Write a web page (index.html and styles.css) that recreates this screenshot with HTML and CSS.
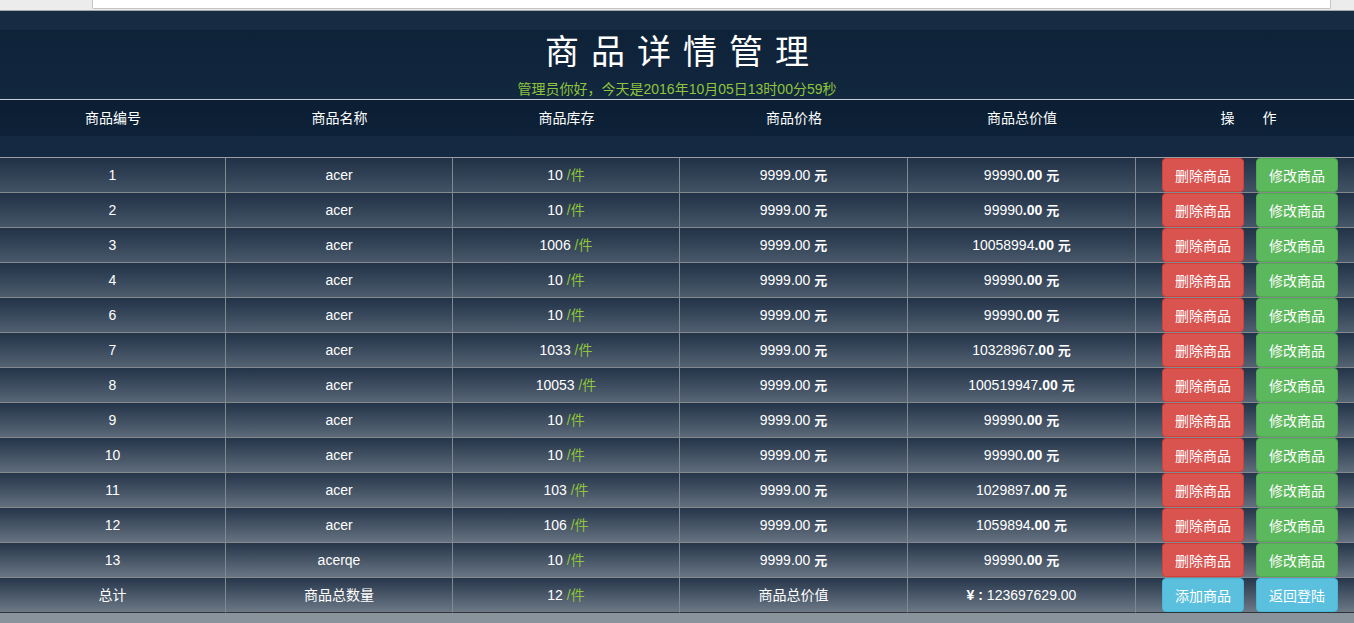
FILE: index.html
```html
<!DOCTYPE html>
<html lang="zh-CN">
<head>
<meta charset="utf-8">
<title>商品详情管理</title>
<link rel="stylesheet" href="styles.css">
</head>
<body>
<div class="chrome"><div class="addr"></div></div>
<div class="band"></div>
<header class="titlebox">
  <h1 class="title">商品详情管理</h1>
  <p class="greet">管理员你好，今天是2016年10月05日13时00分59秒</p>
</header>
<table class="goods">
  <colgroup>
    <col class="c1"><col class="c2"><col class="c3"><col class="c4"><col class="c5"><col class="c6">
  </colgroup>
  <thead>
    <tr class="head">
      <th>商品编号</th><th>商品名称</th><th>商品库存</th><th>商品价格</th><th>商品总价值</th><th class="op">操　　作</th>
    </tr>
    <tr class="spacer"><th colspan="6"></th></tr>
  </thead>
  <tbody>
    <tr><td>1</td><td>acer</td><td>10 <span class="unit">/件</span></td><td>9999.00 <b class="yuan">元</b></td><td>99990<b>.00 <span class="yuan">元</span></b></td><td class="ops"><div class="btns"><button class="btn red">删除商品</button><button class="btn green">修改商品</button></div></td></tr>
    <tr><td>2</td><td>acer</td><td>10 <span class="unit">/件</span></td><td>9999.00 <b class="yuan">元</b></td><td>99990<b>.00 <span class="yuan">元</span></b></td><td class="ops"><div class="btns"><button class="btn red">删除商品</button><button class="btn green">修改商品</button></div></td></tr>
    <tr><td>3</td><td>acer</td><td>1006 <span class="unit">/件</span></td><td>9999.00 <b class="yuan">元</b></td><td>10058994<b>.00 <span class="yuan">元</span></b></td><td class="ops"><div class="btns"><button class="btn red">删除商品</button><button class="btn green">修改商品</button></div></td></tr>
    <tr><td>4</td><td>acer</td><td>10 <span class="unit">/件</span></td><td>9999.00 <b class="yuan">元</b></td><td>99990<b>.00 <span class="yuan">元</span></b></td><td class="ops"><div class="btns"><button class="btn red">删除商品</button><button class="btn green">修改商品</button></div></td></tr>
    <tr><td>6</td><td>acer</td><td>10 <span class="unit">/件</span></td><td>9999.00 <b class="yuan">元</b></td><td>99990<b>.00 <span class="yuan">元</span></b></td><td class="ops"><div class="btns"><button class="btn red">删除商品</button><button class="btn green">修改商品</button></div></td></tr>
    <tr><td>7</td><td>acer</td><td>1033 <span class="unit">/件</span></td><td>9999.00 <b class="yuan">元</b></td><td>10328967<b>.00 <span class="yuan">元</span></b></td><td class="ops"><div class="btns"><button class="btn red">删除商品</button><button class="btn green">修改商品</button></div></td></tr>
    <tr><td>8</td><td>acer</td><td>10053 <span class="unit">/件</span></td><td>9999.00 <b class="yuan">元</b></td><td>100519947<b>.00 <span class="yuan">元</span></b></td><td class="ops"><div class="btns"><button class="btn red">删除商品</button><button class="btn green">修改商品</button></div></td></tr>
    <tr><td>9</td><td>acer</td><td>10 <span class="unit">/件</span></td><td>9999.00 <b class="yuan">元</b></td><td>99990<b>.00 <span class="yuan">元</span></b></td><td class="ops"><div class="btns"><button class="btn red">删除商品</button><button class="btn green">修改商品</button></div></td></tr>
    <tr><td>10</td><td>acer</td><td>10 <span class="unit">/件</span></td><td>9999.00 <b class="yuan">元</b></td><td>99990<b>.00 <span class="yuan">元</span></b></td><td class="ops"><div class="btns"><button class="btn red">删除商品</button><button class="btn green">修改商品</button></div></td></tr>
    <tr><td>11</td><td>acer</td><td>103 <span class="unit">/件</span></td><td>9999.00 <b class="yuan">元</b></td><td>1029897<b>.00 <span class="yuan">元</span></b></td><td class="ops"><div class="btns"><button class="btn red">删除商品</button><button class="btn green">修改商品</button></div></td></tr>
    <tr><td>12</td><td>acer</td><td>106 <span class="unit">/件</span></td><td>9999.00 <b class="yuan">元</b></td><td>1059894<b>.00 <span class="yuan">元</span></b></td><td class="ops"><div class="btns"><button class="btn red">删除商品</button><button class="btn green">修改商品</button></div></td></tr>
    <tr><td>13</td><td>acerqe</td><td>10 <span class="unit">/件</span></td><td>9999.00 <b class="yuan">元</b></td><td>99990<b>.00 <span class="yuan">元</span></b></td><td class="ops"><div class="btns"><button class="btn red">删除商品</button><button class="btn green">修改商品</button></div></td></tr>
    <tr class="total"><td>总计</td><td>商品总数量</td><td>12 <span class="unit">/件</span></td><td>商品总价值</td><td><b>¥ :</b> 123697629.00</td><td class="ops"><div class="btns"><button class="btn blue">添加商品</button><button class="btn blue">返回登陆</button></div></td></tr>
  </tbody>
</table>
</body>
</html>
```
FILE: styles.css
```css
html, body {
  margin: 0;
  padding: 0;
}
body {
  background: #89939c;
  font-family: "Liberation Sans", "Noto Sans CJK SC", sans-serif;
  font-size: 14px;
  color: #fff;
}
.chrome {
  height: 10px;
  background: #ececec;
  border-bottom: 1px solid #a8a8a8;
  padding-left: 92px;
  padding-right: 23px;
}
.addr {
  height: 8px;
  background: #fff;
  border: 1px solid #c4c4c4;
  border-top: none;
  border-radius: 0 0 2px 2px;
}
.band {
  height: 19px;
  background: #172b42;
}
.titlebox {
  height: 69px;
  background: linear-gradient(#0e2238, #12283f);
  border-bottom: 1px solid #c9ced4;
  text-align: center;
}
.title {
  margin: 0;
  padding-left: 12px;
  font-family: "Noto Sans CJK SC", sans-serif;
  font-weight: normal;
  font-size: 34px;
  line-height: 40px;
  letter-spacing: 12px;
  color: #fff;
}
.greet {
  margin: 9px 0 0;
  font-size: 14px;
  line-height: 20px;
  color: #8fc43c;
}
.goods {
  width: 100%;
  table-layout: fixed;
  border-collapse: separate;
  border-spacing: 0;
}
.c1 { width: 226px; }
.c2 { width: 227px; }
.c3 { width: 227px; }
.c4 { width: 228px; }
.c5 { width: 228px; }
.goods th, .goods td {
  box-sizing: border-box;
  padding: 0;
  text-align: center;
  font-weight: normal;
}
.head th {
  height: 36px;
  background: linear-gradient(#0b1e33, #0d2138);
  line-height: 20px;
}
.op {
  white-space: pre;
  padding-left: 7px !important;
}
.spacer th {
  height: 22px;
  background: #152a42;
  border-bottom: 1px solid #9a9ea3;
}
.goods tbody {
  background: linear-gradient(#405164, #6f7b88);
}
.goods tbody tr {
  background: linear-gradient(rgba(27, 43, 65, 0.85), rgba(27, 43, 65, 0));
}
.goods td {
  height: 35px;
  border-bottom: 1px solid #85898e;
  line-height: 20px;
}
.goods td:not(:last-child) {
  border-right: 1px solid #808891;
}
.goods tr.total td {
  border-bottom-color: #2e3337;
}
.unit {
  color: #8fc43c;
}
.goods b {
  font-weight: bold;
}
.yuan {
  font-size: 13px;
  font-weight: bold;
}
.btns {
  display: flex;
  gap: 12px;
  padding-left: 26px;
}
.btn {
  box-sizing: border-box;
  height: 34px;
  width: 82px;
  padding: 6px 12px;
  font-family: "Noto Sans CJK SC", "Liberation Sans", sans-serif;
  font-size: 14px;
  line-height: 20px;
  color: #fff;
  border: 1px solid transparent;
  border-radius: 4px;
  white-space: nowrap;
}
.red {
  background: #d9534f;
  border-color: #d43f3a;
}
.green {
  background: #5cb85c;
  border-color: #4cae4c;
}
.blue {
  background: #5bc0de;
  border-color: #46b8da;
}
```
